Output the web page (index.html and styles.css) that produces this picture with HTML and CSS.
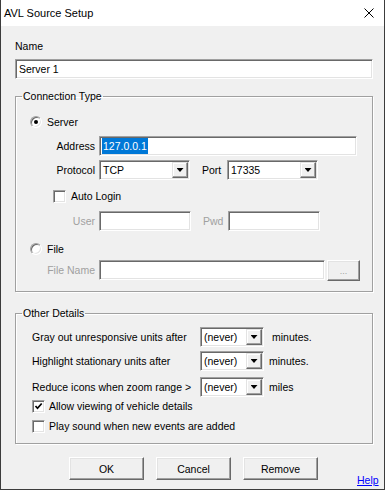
FILE: index.html
```html
<!DOCTYPE html>
<html lang="en">
<head>
    <meta charset="UTF-8">
    <title>AVL Source Setup</title>
    <link rel="stylesheet" href="styles.css">
</head>
<body>
    <div class="window">
        <div class="titlebar">
            <span class="title">AVL Source Setup</span>
            <svg class="close" width="10" height="10" viewBox="0 0 10 10">
                <path d="M0.5 0.5 L9.5 9.5 M9.5 0.5 L0.5 9.5" stroke="#000" stroke-width="1" fill="none"/>
            </svg>
        </div>

        <div class="content">
            <label class="name-label">Name</label>
            <div class="field name-field">Server 1</div>

            <!-- Connection type -->
            <fieldset class="group">
                <legend>Connection Type</legend>
                <div class="group-body conn-body">
                    <div class="radio-row first">
                        <span class="radio on"></span>Server
                    </div>
                    <div class="form-row address-row">
                        <span class="lbl">Address</span>
                        <div class="field address"><span class="selected">127.0.0.1</span></div>
                    </div>
                    <div class="form-row protocol-row">
                        <span class="lbl">Protocol</span>
                        <div class="field combo w91">TCP<span class="drop"></span></div>
                        <span class="lbl2">Port</span>
                        <div class="field combo w91">17335<span class="drop"></span></div>
                    </div>
                    <div class="check-row login-row">
                        <span class="check"></span>Auto Login
                    </div>
                    <div class="form-row user-row disabled">
                        <span class="lbl">User</span>
                        <div class="field w92"></div>
                        <span class="lbl2">Pwd</span>
                        <div class="field w92"></div>
                    </div>
                    <div class="radio-row file-radio">
                        <span class="radio"></span>File
                    </div>
                    <div class="form-row file-row disabled">
                        <span class="lbl">File Name</span>
                        <div class="field file-name"></div>
                        <button class="btn browse">...</button>
                    </div>
                </div>
            </fieldset>

            <!-- Other details -->
            <fieldset class="group other">
                <legend>Other Details</legend>
                <div class="group-body other-body">
                    <div class="opt-row first">
                        <span class="opt-lbl">Gray out unresponsive units after</span>
                        <div class="field combo w64">(never)<span class="drop"></span></div>
                        <span class="unit wide">minutes.</span>
                    </div>
                    <div class="opt-row second">
                        <span class="opt-lbl">Highlight stationary units after</span>
                        <div class="field combo w64">(never)<span class="drop"></span></div>
                        <span class="unit">minutes.</span>
                    </div>
                    <div class="opt-row third">
                        <span class="opt-lbl">Reduce icons when zoom range &gt;</span>
                        <div class="field combo w64">(never)<span class="drop"></span></div>
                        <span class="unit">miles</span>
                    </div>
                    <div class="check-row opt-check one">
                        <span class="check">
                            <svg width="9" height="9" viewBox="0 0 9 9"><path d="M1.5 4 L3.5 6.3 L7.7 1.5" stroke="#000" stroke-width="1.7" fill="none"/></svg>
                        </span>Allow viewing of vehicle details
                    </div>
                    <div class="check-row opt-check two">
                        <span class="check"></span>Play sound when new events are added
                    </div>
                </div>
            </fieldset>

            <div class="buttons">
                <button class="btn">OK</button>
                <button class="btn">Cancel</button>
                <button class="btn">Remove</button>
                <a class="help" href="#">Help</a>
            </div>
        </div>
    </div>
</body>
</html>
```

FILE: styles.css
```css
* {
    box-sizing: border-box;
}
body {
    margin: 0;
    font-family: "Liberation Sans", Arial, sans-serif;
    font-size: 10.5px;
    color: #000;
    background: #fff;
}
.window {
    width: 385px;
    height: 490px;
    background: #f0f0f0;
    border: 1px solid #3c3c3c;
    border-top: none;
    overflow: hidden;
}
.titlebar {
    height: 26px;
    background: #fff;
    display: flex;
    align-items: center;
    justify-content: space-between;
    padding: 0 10px 0 3px;
    font-size: 11px;
}
.content {
    padding: 14px 11px 0 14px;
}
.name-label {
    display: block;
    line-height: 13px;
    height: 13px;
}

/* sunken edit box */
.field {
    height: 20px;
    background: #fff;
    border: 1px solid;
    border-color: #a0a0a0 #fff #fff #a0a0a0;
    box-shadow: inset 1px 1px 0 #696969, inset -1px -1px 0 #e3e3e3;
    padding: 0 3px;
    display: flex;
    align-items: center;
    flex-shrink: 0;
}
.name-field {
    margin-top: 6px;
}
.selected {
    background: #0078d7;
    color: #fff;
    line-height: 16px;
    padding: 0 1px;
    margin-left: -1px;
}

/* group boxes */
.group {
    margin: 11px 0 0;
    padding: 0;
    border: 1px solid #a0a0a0;
    box-shadow: 1px 1px 0 #fff, inset 1px 1px 0 #fff;
    min-width: 0;
}
.group legend {
    padding: 0 1px;
    margin-left: 6px;
    line-height: 12px;
}
.group.other {
    margin-top: 15px;
}
.conn-body {
    padding: 13px 0 11px;
}
.other-body {
    padding: 8px 0 10px;
}

.radio-row,
.check-row {
    display: flex;
    align-items: center;
    height: 14px;
}
.radio-row {
    padding-left: 14px;
    gap: 5px;
}
.radio {
    width: 12px;
    height: 12px;
    border-radius: 50%;
    background: #fff;
    border: 1px solid;
    border-color: #a0a0a0 #fff #fff #a0a0a0;
    box-shadow: inset 1px 1px 0 #696969, inset -1px -1px 0 #e3e3e3;
    display: flex;
    align-items: center;
    justify-content: center;
}
.radio.on::after {
    content: "";
    width: 4px;
    height: 4px;
    border-radius: 50%;
    background: #000;
}
.check {
    width: 13px;
    height: 13px;
    background: #fff;
    border: 1px solid;
    border-color: #a0a0a0 #fff #fff #a0a0a0;
    box-shadow: inset 1px 1px 0 #696969, inset -1px -1px 0 #e3e3e3;
    display: flex;
    align-items: center;
    justify-content: center;
    flex-shrink: 0;
}
.check-row {
    padding-left: 37px;
    gap: 5px;
}

.form-row {
    display: flex;
    align-items: center;
    height: 20px;
}
.lbl {
    width: 79px;
    margin-right: 4px;
    text-align: right;
    flex-shrink: 0;
}
.lbl2 {
    width: 25px;
    margin-left: 12px;
    flex-shrink: 0;
}
.disabled .lbl,
.disabled .lbl2 {
    color: #a0a0a0;
}

.address-row { margin-top: 7px; }
.protocol-row { margin-top: 4px; }
.login-row { margin-top: 9px; }
.user-row { margin-top: 8px; }
.file-radio { margin-top: 11px; }
.file-row { margin-top: 4px; }

.address { width: 258px; }
.w91 { width: 91px; }
.w92 { width: 92px; }
.w64 { width: 64px; }
.file-name { width: 226px; }

/* combo box with drop button */
.combo {
    padding: 1px 1px 1px 3px;
    justify-content: space-between;
}
.drop {
    width: 16px;
    height: 16px;
    background: #f0f0f0;
    border: 1px solid;
    border-color: #e3e3e3 #696969 #696969 #e3e3e3;
    box-shadow: inset -1px -1px 0 #a0a0a0, inset 1px 1px 0 #fff;
    display: flex;
    align-items: center;
    justify-content: center;
}
.drop::after {
    content: "";
    width: 7px;
    height: 4px;
    background: #000;
    clip-path: polygon(0 0, 100% 0, 50% 100%);
}

/* raised push button */
.btn {
    width: 75px;
    height: 23px;
    padding: 0;
    font: inherit;
    color: #000;
    background: #f0f0f0;
    border: 1px solid;
    border-color: #fff #696969 #696969 #fff;
    box-shadow: inset -1px -1px 0 #a0a0a0, inset 1px 1px 0 #e3e3e3;
    flex-shrink: 0;
}
.btn.browse {
    width: 33px;
    height: 21px;
    margin-left: 2px;
    margin-top: 1px;
    color: #a0a0a0;
    font-size: 9px;
}

.opt-row {
    display: flex;
    align-items: center;
    height: 20px;
    padding-left: 16px;
}
.opt-lbl {
    width: 168px;
    flex-shrink: 0;
    white-space: nowrap;
}
.unit {
    margin-left: 5px;
}
.unit.wide {
    margin-left: 8px;
}
.opt-row.second { margin-top: 4px; }
.opt-row.third { margin-top: 6px; }
.opt-check {
    padding-left: 16px;
    gap: 4px;
}
.opt-check.one { margin-top: 2px; }
.opt-check.two { margin-top: 6px; }

.buttons {
    display: flex;
    align-items: flex-end;
    margin: 13px 0 0 54px;
    gap: 12px;
}
.help {
    margin-left: 27px;
    margin-bottom: -7px;
    line-height: 13px;
    color: #0000ff;
    white-space: nowrap;
}
```
